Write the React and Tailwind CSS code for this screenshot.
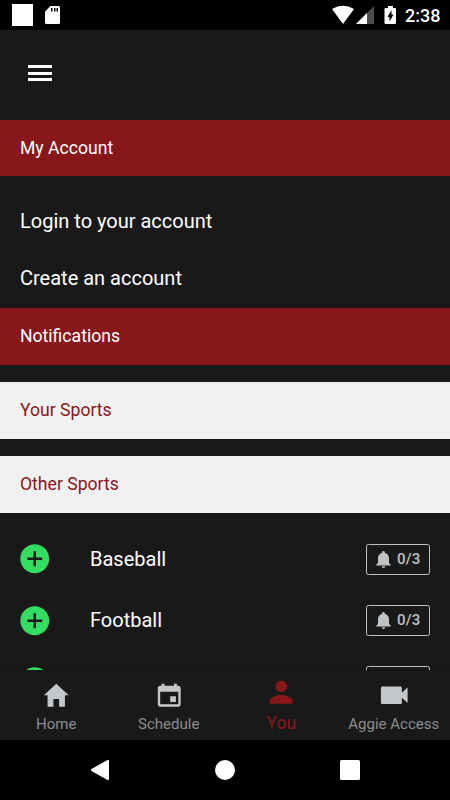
function Icon({ size, className, children }) {
  return (
    <svg width={size} height={size} viewBox="0 0 512 512" fill="currentColor" className={className}>
      {children}
    </svg>
  );
}

const HOME = <path d="M208 448V320h96v128h97.6V256H464L256 64 48 256h62.4v192z" />;
const CALENDAR = (
  <path d="M368 272h-96v96h96v-96zm-32-208v32H176V64h-48v32h-24c-22 0-40 18-40 40v272c0 22 18 40 40 40h304c22 0 40-18 40-40V136c0-22-18-40-40-40h-24V64h-48zm72 344H104V196h304v212z" />
);
const PERSON = (
  <path d="M256 256c52.8 0 96-43.2 96-96s-43.2-96-96-96-96 43.200-96 96 43.200 96 96 96zm0 48c-63.600 0-192 32.400-192 96v48h384v-48c0-63.600-128.400-96-192-96z" />
);
const VIDEO = (
  <path d="M384 215v-79c0-16-12-26-26-26H58c-14 0-26 10-26 26v240c0 16 12 26 26 26h300c14 0 26-10 26-26v-79l96 91V124z" />
);
const BELL = (
  <path d="M256 464c22.800 0 41.400-18.700 41.400-41.600h-82.800c0 22.900 18.600 41.600 41.400 41.600zm134.600-124.800V224.800c0-63.440-44.500-117.500-103.500-131V79.200C287.100 61.500 273.600 48 256 48s-31.100 13.500-31.100 31.200v14.600c-59 13.500-103.500 67.600-103.500 131v114.400L80 380.800v20.800h352v-20.800l-41.400-41.600z" />
);
const ADD = (
  <path d="M256 48C141.100 48 48 141.100 48 256s93.100 208 208 208 208-93.100 208-208S370.900 48 256 48zm107 226h-89v89h-36v-89h-89v-36h89v-89h36v89h89v36z" />
);

function StatusBar() {
  return (
    <div className="flex h-[30px] shrink-0 items-center bg-black text-white">
      <div className="ml-3 h-[21.500px] w-[21px] bg-white" />
      <svg width="15" height="18" viewBox="0 0 15 18" className="ml-3">
        <path fill="#fff" d="M5.500 0H13.500Q15 0 15 1.500V16.500Q15 18 13.500 18H1.500Q0 18 0 16.500V5.500Z" />
        <path fill="#000" d="M6 2h1.500v3.500H6zM9 2h1.500v3.500H9zM11.500 2H13v3.500h-1.500z" />
      </svg>
      <svg width="88" height="30" viewBox="0 0 88 30" fill="#fff" className="ml-[271px]">
        <path d="M1 9Q12 2.500 23 9L12 24Z" />
        <path d="M43 6V24H25Z" fill="#4d4d4d" />
        <path d="M36 13V24H25Z" />
        <path d="M57 6V8H54.500Q53.500 8 53.500 9V23Q53.500 24 54.500 24H64Q65 24 65 23V9Q65 8 64 8H62V6Z" />
        <path d="M60.500 10L56.500 17H58.500V21.500L62.500 14.500H60.500Z" fill="#000" />
      </svg>
      <span className="-ml-[14px] pt-px text-[18px] font-medium leading-[30px]">2:38</span>
    </div>
  );
}

function SportRow({ name, count }) {
  return (
    <div className="flex h-[61.300px] shrink-0 items-center pl-[17px] pr-5">
      <Icon size={35.500} className="shrink-0 text-[#33dd62]">{ADD}</Icon>
      <span className="ml-[37.500px] flex-1 text-[20px] leading-6">{name}</span>
      <div className="flex h-[31px] w-16 items-center rounded-[2.500px] border border-[#c0c3c5] pl-[5.500px] text-[#c0c3c5]">
        <Icon size={21}>{BELL}</Icon>
        <span className="ml-[3.500px] text-[15px] font-medium leading-5 tracking-[0.200px]">{count}</span>
      </div>
    </div>
  );
}

function Section({ children, light }) {
  return (
    <h2
      className={
        light
          ? "flex h-[57px] shrink-0 items-center bg-[#f1f1f1] px-5 text-[17.600px] font-normal text-[#881719]"
          : "flex h-[56.400px] shrink-0 items-center bg-[#881719] px-5 pb-px text-[17.600px] font-normal text-white"
      }
    >
      {children}
    </h2>
  );
}

function Tab({ icon, label, active }) {
  return (
    <button
      className={
        active
          ? "flex flex-1 flex-col items-center pt-[6px] text-[#881719]"
          : "flex flex-1 flex-col items-center pt-[9px] text-[#c5c8ca]"
      }
    >
      <Icon size={30.500}>{icon}</Icon>
      <span
        className={
          active
            ? "mt-[5px] whitespace-nowrap text-[17.500px] leading-5"
            : "mt-[3px] whitespace-nowrap text-[15px] leading-5 text-[#8c8c8c]"
        }
      >
        {label}
      </span>
    </button>
  );
}

export default function App() {
  return (
    <div className="flex h-[800px] w-[450px] flex-col overflow-hidden bg-[#191919] font-['Roboto',sans-serif] text-white">
      <StatusBar />
      <header className="flex h-[90px] shrink-0 items-start pl-7 pt-[35px]">
        <button aria-label="Menu" className="flex flex-col gap-[3.500px]">
          <span className="h-[3px] w-6 bg-white" />
          <span className="h-[3px] w-6 bg-white" />
          <span className="h-[3px] w-6 bg-white" />
        </button>
      </header>
      <main className="flex h-[550px] shrink-0 flex-col overflow-hidden">
        <Section>My Account</Section>
        <div className="flex h-[132px] shrink-0 flex-col px-5 pt-4 text-[20px]">
          <a className="flex h-[57px] items-center">Login to your account</a>
          <a className="flex h-[57px] items-center">Create an account</a>
        </div>
        <Section>Notifications</Section>
        <div className="h-[17.200px] shrink-0" />
        <Section light>Your Sports</Section>
        <div className="h-[17px] shrink-0" />
        <Section light>Other Sports</Section>
        <div className="flex shrink-0 flex-col pt-[15.500px]">
          <SportRow name="Baseball" count="0/3" />
          <SportRow name="Football" count="0/3" />
          <SportRow />
        </div>
      </main>
      <nav className="flex h-[70px] shrink-0 border-t border-[#151515]">
        <Tab icon={HOME} label="Home" />
        <Tab icon={CALENDAR} label="Schedule" />
        <Tab icon={PERSON} label="You" active />
        <Tab icon={VIDEO} label="Aggie Access" />
      </nav>
      <div className="flex h-[60px] shrink-0 items-center bg-black">
        <svg width="18" height="20" viewBox="0 0 18 20" fill="#fff" className="ml-[91px]">
          <path d="M0.500 9Q-0.500 10 0.500 11L16.500 20Q18 20.300 18 19V1Q18 -0.300 16.500 0Z" />
        </svg>
        <div className="ml-[106px] size-5 rounded-full bg-white" />
        <div className="ml-[105px] size-5 rounded-[1.500px] bg-white" />
      </div>
    </div>
  );
}
